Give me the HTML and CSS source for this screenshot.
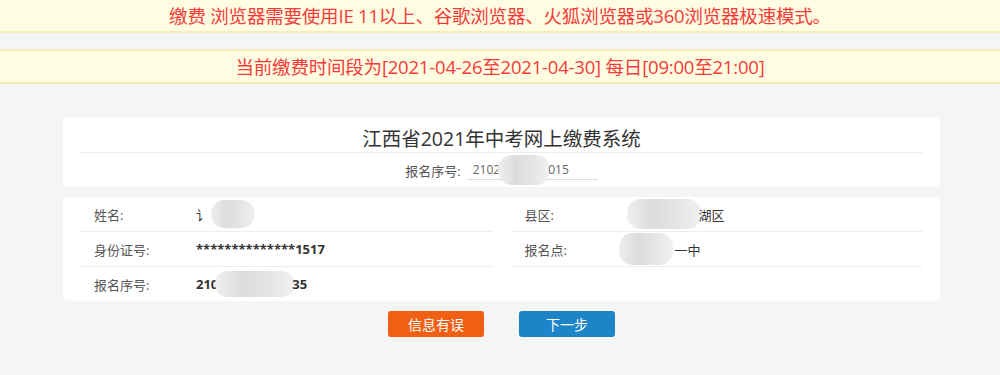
FILE: index.html
```html
<!DOCTYPE html>
<html lang="zh-CN">
<head>
    <meta charset="UTF-8">
    <title>江西省2021年中考网上缴费系统</title>
    <link rel="stylesheet" href="styles.css">
</head>
<body>
    <div class="notice notice-top">缴费 浏览器需要使用IE 11以上、谷歌浏览器、火狐浏览器或360浏览器极速模式。</div>
    <div class="notice notice-time">当前缴费时间段为[2021-04-26至2021-04-30] 每日[09:00至21:00]</div>

    <div class="wrap">
        <div class="card head">
            <h1 class="title">江西省2021年中考网上缴费系统</h1>
            <div class="search">
                <span class="search-label">报名序号:</span>
                <span class="search-input">2102<span class="blob blob-s"></span>015</span>
            </div>
        </div>

        <div class="card info">
            <div class="cell">
                <span class="label">姓名:</span>
                <span class="value plain">讠<span class="blob blob-name"></span></span>
            </div>
            <div class="cell">
                <span class="label">县区:</span>
                <span class="value plain"><span class="blob blob-area"></span>湖区</span>
            </div>
            <div class="cell">
                <span class="label">身份证号:</span>
                <span class="value">**************1517</span>
            </div>
            <div class="cell">
                <span class="label">报名点:</span>
                <span class="value plain"><span class="blob blob-school"></span>一中</span>
            </div>
            <div class="cell last">
                <span class="label">报名序号:</span>
                <span class="value">210<span class="blob blob-no"></span>35</span>
            </div>
            <div class="cell last"></div>
        </div>

        <div class="actions">
            <button class="btn btn-err">信息有误</button>
            <button class="btn btn-next">下一步</button>
        </div>
    </div>
</body>
</html>
```

FILE: styles.css
```css
body {
    margin: 0;
    background-color: #f5f5f5;
    font-family: "Open Sans", "Noto Sans CJK SC", sans-serif;
    color: #333;
}
/* 顶部提示 */
.notice {
    height: 31px; line-height: 31px;
    background-color: #fffde1;
    border-bottom: 2px solid #f6edbb;
    color: #f53b3b;
    font-size: 18.5px;
    text-align: center;
    letter-spacing: -0.2px;
}
.notice-time {
    margin-top: 16px;
    border-top: 2px solid #f6edbb;
}
.wrap {
    width: 877px;
    margin: 33px 0 0 63px;
}
.card {
    background-color: #fff;
    border-radius: 5px;
    padding: 0 17px;
}
.head {
    height: 70px;
}
.title {
    margin: 0;
    height: 35px; line-height: 43px;
    border-bottom: 1px solid #eee;
    font-size: 19.5px;
    font-weight: normal;
    text-align: center;
    color: #333;
}
.search {
    display: flex;
    justify-content: center;
    align-items: center;
    height: 34px;
    font-size: 12px;
    color: #555;
}
.search-label {
    font-size: 13px;
    margin-right: 6px;
}
.search-input {
    display: inline-flex;
    align-items: center;
    width: 125px; height: 18px;
    padding-left: 6px;
    border-bottom: 1px solid #ddd;
    color: #666;
}
.info {
    margin-top: 10px;
    display: grid;
    grid-template-columns: 1fr 1fr;
    column-gap: 18px;
}
.cell {
    display: flex;
    align-items: center;
    height: 34px;
    border-bottom: 1px solid #eee;
    padding-left: 14px;
    font-size: 13px;
}
.cell.last {
    border-bottom: none;
}
.label {
    width: 102px;
    color: #555;
}
.value {
    display: inline-flex;
    align-items: center;
    font-weight: bold;
    color: #333;
}
.value.plain {
    font-weight: normal;
}
/* 马赛克 */
.blob {
    display: inline-block;
    border-radius: 14px;
    background: linear-gradient(90deg, #efefef 0%, #dcdcdc 35%, #e6e6e6 70%, #f1f1f1 100%);
}
.blob-s { width: 52px; height: 30px; margin: 0 -2px; }
.blob-name { width: 44px; height: 28px; margin-left: 2px; }
.blob-area { width: 74px; height: 30px; margin-right: -2px; }
.blob-school { width: 54px; height: 32px; margin-left: -8px; margin-right: 2px; }
.blob-no { width: 80px; height: 26px; margin: 0 -3px; }
.actions {
    display: flex;
    justify-content: center;
    gap: 35px;
    margin-top: 10px;
}
.btn {
    width: 96px; height: 26px;
    border: none;
    border-radius: 3px;
    color: #fff;
    font-family: inherit;
    font-size: 14px;
}
.btn-err {
    background-color: #ef5f14;
}
.btn-next {
    background-color: #1e84c8;
}
```
